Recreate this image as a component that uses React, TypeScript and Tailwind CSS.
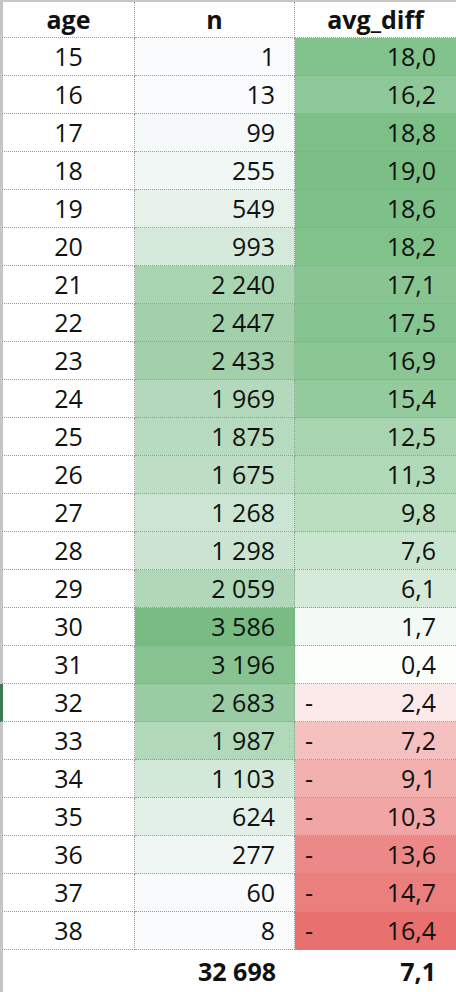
const rows: [number, number, number][] = [
  [15, 1, 18.0],
  [16, 13, 16.2],
  [17, 99, 18.8],
  [18, 255, 19.0],
  [19, 549, 18.6],
  [20, 993, 18.2],
  [21, 2240, 17.1],
  [22, 2447, 17.5],
  [23, 2433, 16.9],
  [24, 1969, 15.4],
  [25, 1875, 12.5],
  [26, 1675, 11.3],
  [27, 1268, 9.8],
  [28, 1298, 7.6],
  [29, 2059, 6.1],
  [30, 3586, 1.7],
  [31, 3196, 0.4],
  [32, 2683, -2.4],
  [33, 1987, -7.2],
  [34, 1103, -9.1],
  [35, 624, -10.3],
  [36, 277, -13.6],
  [37, 60, -14.7],
  [38, 8, -16.4],
];

const N_MAX = 3586;
const D_MAX = 19.0;
const D_MIN = -16.4;

function mix(a: number[], b: number[], t: number) {
  const c = a.map((v, i) => Math.round(v + (b[i] - v) * t));
  return `rgb(${c[0]}, ${c[1]}, ${c[2]})`;
}

function nColor(n: number) {
  return mix([250, 251, 253], [120, 188, 132], n / N_MAX);
}

function dColor(d: number) {
  if (d >= 0) return mix([255, 255, 255], [123, 191, 134], d / D_MAX);
  return mix([255, 255, 255], [232, 112, 111], d / D_MIN);
}

function fmtN(n: number) {
  return n.toString().replace(/\B(?=(\d{3})+(?!\d))/g, ' ');
}

function fmtD(d: number) {
  return Math.abs(d).toFixed(1).replace('.', ',');
}

export default function App() {
  return (
    <div
      className="w-[456px] h-[992px] bg-white text-[#111] overflow-hidden"
      style={{ fontFamily: '"Open Sans", "Noto Sans", sans-serif' }}
    >
      <div className="border-t-2 border-[#c6c6c6]">
        {/* Header */}
        <div className="grid grid-cols-[135px_160px_1fr] h-[36px] text-[25px] font-bold leading-none">
          <div
            className="border-l-[3px] border-l-[#c4c4c4] border-r border-b border-dotted border-r-[#9a9a9a] border-b-[#9a9a9a] flex items-center justify-center"
            style={{ borderLeftStyle: 'solid' }}
          >
            age
          </div>
          <div className="border-r border-b border-dotted border-[#9a9a9a] flex items-center justify-center">
            n
          </div>
          <div className="border-b border-dotted border-[#9a9a9a] flex items-center justify-center">
            avg_diff
          </div>
        </div>

        {rows.map(([age, n, d]) => (
          <div key={age} className="grid grid-cols-[135px_160px_1fr] h-[38px] text-[25px] leading-none">
            <div
              className={
                'border-l-[3px] border-r border-b border-dotted border-r-[#9a9a9a] border-b-[#9a9a9a] flex items-center justify-center ' +
                (age === 32 ? 'border-l-[#3d7a52]' : 'border-l-[#c4c4c4]')
              }
              style={{ borderLeftStyle: 'solid' }}
            >
              {age}
            </div>
            <div
              className="border-r border-b border-dotted border-[#9a9a9a] flex items-center justify-end pr-[19px]"
              style={{ backgroundColor: nColor(n) }}
            >
              {fmtN(n)}
            </div>
            <div
              className="border-b border-dotted border-[#9a9a9a] flex items-center justify-between pl-[10px] pr-[20px]"
              style={{ backgroundColor: dColor(d) }}
            >
              <span>{d < 0 ? '-' : ''}</span>
              <span>{fmtD(d)}</span>
            </div>
          </div>
        ))}

        {/* Total */}
        <div className="grid grid-cols-[135px_160px_1fr] h-[42px] text-[25px] font-bold leading-none">
          <div className="border-l-[3px] border-solid border-[#c4c4c4]" />
          <div className="flex items-center justify-end pr-[19px]">32 698</div>
          <div className="flex items-center justify-end pr-[20px]">7,1</div>
        </div>
      </div>
    </div>
  );
}
